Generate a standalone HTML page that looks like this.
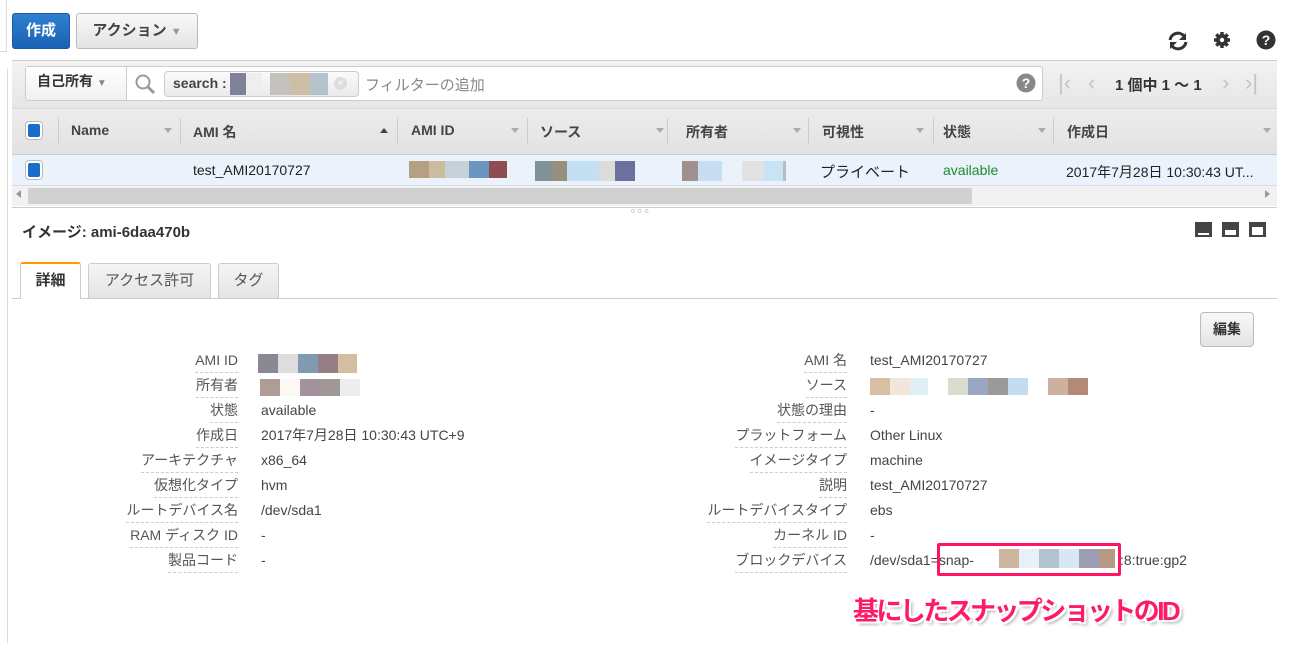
<!DOCTYPE html>
<html><head><meta charset="utf-8">
<style>
*{box-sizing:border-box;margin:0;padding:0}
body{width:1291px;height:651px;background:#fff;font-family:"Liberation Sans","Noto Sans CJK JP",sans-serif;font-size:14px;color:#333;position:relative;overflow:hidden}
.a{position:absolute;white-space:nowrap}
.btn{position:absolute;border:1px solid #bbb;border-radius:3px;background:linear-gradient(#f8f8f8,#e4e4e4);font-weight:bold;color:#444;text-align:center}
.sw{position:absolute;height:17px}
.hd{position:absolute;top:122px;font-weight:bold;font-size:14px;color:#444}
.dv{position:absolute;top:118px;width:1px;height:26px;background:#ccc}
.ar{position:absolute;top:128px;width:0;height:0;border-left:4px solid transparent;border-right:4px solid transparent;border-top:5px solid #aaa}
.lb{position:absolute;text-align:right;color:#555;font-size:14px;border-bottom:1px dashed #ccc;padding-bottom:3px;line-height:17px}
.vl{position:absolute;font-size:14px;color:#444;line-height:17px}
.pg{position:absolute;top:70px;font-size:22px;color:#c4c4c4}
</style></head><body>
<div class="a" style="left:7px;top:68px;width:1px;height:575px;background:#ddd"></div>
<div class="a" style="left:0;top:0;width:7px;height:52px;border-right:1px solid #ddd;border-bottom:1px solid #ddd"></div>

<div class="btn" style="left:12px;top:13px;width:58px;height:36px;background:linear-gradient(#2f7fd0,#1a62b5);border-color:#165aa7;color:#fff;line-height:34px;font-size:15px">作成</div>
<div class="btn" style="left:76px;top:13px;width:122px;height:36px;line-height:34px;font-size:15px">アクション <span style="color:#999;font-size:11px">▼</span></div>

<svg class="a" style="left:1166px;top:29px" width="24" height="24" viewBox="0 0 24 24"><path d="M4 11a8 8 0 0 1 14-4" fill="none" stroke="#333" stroke-width="3"/><path d="M20 4v7h-7z" fill="#333"/><path d="M20 13a8 8 0 0 1-14 4" fill="none" stroke="#333" stroke-width="3"/><path d="M4 20v-7h7z" fill="#333"/></svg>
<svg class="a" style="left:1213px;top:31px" width="18" height="18" viewBox="0 0 18 18"><circle cx="9" cy="9" r="6" fill="#333"/><g stroke="#333" stroke-width="3.4"><path d="M9 1v16M1 9h16M3.3 3.3l11.4 11.4M14.7 3.3L3.3 14.7"/></g><circle cx="9" cy="9" r="2.2" fill="#fff"/></svg>
<svg class="a" style="left:1256px;top:30px" width="20" height="20" viewBox="0 0 20 20"><circle cx="10" cy="10" r="9.5" fill="#333"/><text x="10" y="15" text-anchor="middle" font-family="Liberation Sans" font-weight="bold" font-size="14" fill="#fff">?</text></svg>

<div class="a" style="left:12px;top:60px;width:1265px;height:48px;background:linear-gradient(#f2f2f2,#e6e6e6);border-top:1px solid #ccc"></div>
<div class="a" style="left:25px;top:66px;width:1018px;height:35px;background:#fff;border:1px solid #ccc;border-radius:3px"></div>
<div class="a" style="left:26px;top:67px;width:101px;height:33px;background:linear-gradient(#fff,#f0f0f0);border-right:1px solid #ccc;font-weight:bold;line-height:28px;padding-left:11px;font-size:14px;color:#333">自己所有 <span style="color:#888;font-size:10px">▼</span></div>
<svg class="a" style="left:134px;top:73px" width="22" height="22" viewBox="0 0 22 22"><circle cx="9" cy="9" r="6.5" fill="none" stroke="#999" stroke-width="2"/><path d="M14 14l6 6" stroke="#999" stroke-width="3"/></svg>
<div class="a" style="left:164px;top:71px;width:195px;height:26px;border:1px solid #ccc;border-radius:4px;background:linear-gradient(#fafafa,#eaeaea)"></div>
<div class="a" style="left:173px;top:75px;font-weight:bold;font-size:14px;color:#444">search :</div>
<div class="sw" style="left:230px;top:73px;width:16px;height:22px;background:#80819a"></div>
<div class="sw" style="left:246px;top:73px;width:16px;height:22px;background:#eee"></div>
<div class="sw" style="left:270px;top:73px;width:20px;height:22px;background:#c5c2bd"></div>
<div class="sw" style="left:290px;top:73px;width:20px;height:22px;background:#cdbfa6"></div>
<div class="sw" style="left:310px;top:73px;width:18px;height:22px;background:#b3c3cc"></div>
<div class="a" style="left:334px;top:77px;width:13px;height:13px;border-radius:50%;background:#ddd;color:#fff;font-size:10px;text-align:center;line-height:13px">×</div>
<div class="a" style="left:365px;top:74px;font-size:15px;color:#888">フィルターの追加</div>
<svg class="a" style="left:1016px;top:73px" width="20" height="20" viewBox="0 0 20 20"><circle cx="10" cy="10" r="9.5" fill="#888"/><text x="10" y="15" text-anchor="middle" font-family="Liberation Sans" font-weight="bold" font-size="14" fill="#fff">?</text></svg>
<div class="pg" style="left:1058px">|‹</div>
<div class="pg" style="left:1088px">‹</div>
<div class="a" style="left:1115px;top:74px;font-weight:bold;font-size:15px;color:#333">1 個中 1 ～ 1</div>
<div class="pg" style="left:1222px">›</div>
<div class="pg" style="left:1245px">›|</div>

<div class="a" style="left:12px;top:108px;width:1265px;height:47px;background:linear-gradient(#ececec,#e2e2e2);border-top:1px solid #d8d8d8;border-bottom:1px solid #ccc"></div>
<div class="a" style="left:25px;top:121px;width:18px;height:19px;border:1px solid #bbb;border-radius:4px;background:#fff"><div style="margin:2px;width:12px;height:13px;background:#1a6dcc;border-radius:2px"></div></div>
<div class="dv" style="left:58px"></div>
<div class="hd" style="left:71px">Name</div><div class="ar" style="left:164px"></div><div class="dv" style="left:180px"></div>
<div class="hd" style="left:193px">AMI 名</div><div class="ar" style="left:380px;border-top:none;border-bottom:5px solid #444"></div><div class="dv" style="left:397px"></div>
<div class="hd" style="left:411px">AMI ID</div><div class="ar" style="left:511px"></div><div class="dv" style="left:527px"></div>
<div class="hd" style="left:540px">ソース</div><div class="ar" style="left:656px"></div><div class="dv" style="left:667px"></div>
<div class="hd" style="left:686px">所有者</div><div class="ar" style="left:793px"></div><div class="dv" style="left:808px"></div>
<div class="hd" style="left:822px">可視性</div><div class="ar" style="left:916px"></div><div class="dv" style="left:933px"></div>
<div class="hd" style="left:943px">状態</div><div class="ar" style="left:1038px"></div><div class="dv" style="left:1053px"></div>
<div class="hd" style="left:1067px">作成日</div><div class="ar" style="left:1263px"></div>

<div class="a" style="left:12px;top:155px;width:1265px;height:31px;background:#ebf2fc;border-bottom:1px solid #d5dde8"></div>
<div class="a" style="left:25px;top:160px;width:18px;height:20px;border:1px solid #bbb;border-radius:4px;background:#fff"><div style="margin:2px;width:12px;height:14px;background:#1a6dcc;border-radius:2px"></div></div>
<div class="a" style="left:193px;top:162px;font-size:14px;color:#222">test_AMI20170727</div>
<div class="sw" style="left:409px;top:161px;width:20px;background:#b6a084"></div><div class="sw" style="left:429px;top:161px;width:16px;background:#cbbb9f"></div><div class="sw" style="left:445px;top:161px;width:16px;background:#c5d0d8"></div><div class="sw" style="left:461px;top:161px;width:16px;background:#c5d0d8"></div><div class="sw" style="left:469px;top:161px;width:20px;background:#6896c0"></div><div class="sw" style="left:489px;top:161px;width:18px;background:#8f4d53"></div>
<div class="sw" style="left:535px;top:161px;width:16px;height:20px;background:#7f9298"></div><div class="sw" style="left:551px;top:161px;width:16px;height:20px;background:#958f7c"></div><div class="sw" style="left:567px;top:161px;width:16px;height:20px;background:#c3e0f2"></div><div class="sw" style="left:583px;top:161px;width:16px;height:20px;background:#c3e0f2"></div><div class="sw" style="left:599px;top:161px;width:16px;height:20px;background:#dcddd8"></div><div class="sw" style="left:615px;top:161px;width:20px;height:20px;background:#6b70a0"></div>
<div class="sw" style="left:682px;top:161px;width:16px;height:20px;background:#a19090"></div><div class="sw" style="left:698px;top:161px;width:24px;height:20px;background:#c6ddf2"></div><div class="sw" style="left:742px;top:161px;width:22px;height:20px;background:#e2e2e2"></div><div class="sw" style="left:764px;top:161px;width:19px;height:20px;background:#c7e4f6"></div><div class="sw" style="left:783px;top:161px;width:3px;height:20px;background:#bbb"></div>
<div class="a" style="left:820px;top:161px;font-size:15px;color:#222">プライベート</div>
<div class="a" style="left:943px;top:162px;font-size:14px;color:#1d8a2d">available</div>
<div class="a" style="left:1066px;top:162px;font-size:14px;color:#222">2017年7月28日 10:30:43 UT...</div>

<div class="a" style="left:12px;top:186px;width:1265px;height:20px;background:#f2f2f2"></div>
<div class="a" style="left:28px;top:188px;width:944px;height:16px;background:#d0d0d0"></div>
<div class="a" style="left:16px;top:190px;border-right:5px solid #999;border-top:4px solid transparent;border-bottom:4px solid transparent"></div>
<div class="a" style="left:1265px;top:190px;border-left:5px solid #999;border-top:4px solid transparent;border-bottom:4px solid transparent"></div>
<div class="a" style="left:12px;top:207px;width:1265px;height:1px;background:#ccc"></div>
<div class="a" style="left:631px;top:208px;font-size:7px;color:#bbb;letter-spacing:3px">ooo</div>

<div class="a" style="left:22px;top:221px;font-weight:bold;font-size:15px;color:#333">イメージ: ami-6daa470b</div>
<div class="a" style="left:1195px;top:222px;width:17px;height:15px;background:#444"><div style="position:absolute;left:3px;bottom:2px;width:11px;height:2px;background:#fff"></div></div>
<div class="a" style="left:1222px;top:222px;width:17px;height:15px;background:#444"><div style="position:absolute;left:3px;bottom:2px;width:11px;height:5px;background:#fff"></div></div>
<div class="a" style="left:1249px;top:222px;width:17px;height:15px;background:#444"><div style="position:absolute;left:3px;bottom:2px;width:11px;height:8px;background:#fff"></div></div>

<div class="a" style="left:12px;top:298px;width:1265px;height:1px;background:#ccc"></div>
<div class="a" style="left:20px;top:262px;width:61px;height:37px;background:#fff;border:1px solid #ccc;border-top:2px solid #f90;border-bottom:none;border-radius:3px 3px 0 0;text-align:center;line-height:34px;font-weight:bold;font-size:15px;color:#333">詳細</div>
<div class="a" style="left:88px;top:263px;width:123px;height:35px;background:linear-gradient(#f5f5f5,#e4e4e4);border:1px solid #ccc;border-bottom:none;border-radius:3px 3px 0 0;text-align:center;line-height:34px;font-size:15px;color:#555">アクセス許可</div>
<div class="a" style="left:218px;top:263px;width:61px;height:35px;background:linear-gradient(#f5f5f5,#e4e4e4);border:1px solid #ccc;border-bottom:none;border-radius:3px 3px 0 0;text-align:center;line-height:34px;font-size:15px;color:#555">タグ</div>

<div class="btn" style="left:1200px;top:312px;width:54px;height:35px;line-height:33px;font-size:14px;font-weight:bold;color:#333;border-radius:4px">編集</div>

<div class="lb" style="right:1053px;top:352px">AMI ID</div>
<div class="lb" style="right:1053px;top:377px">所有者</div>
<div class="lb" style="right:1053px;top:402px">状態</div>
<div class="lb" style="right:1053px;top:427px">作成日</div>
<div class="lb" style="right:1053px;top:452px">アーキテクチャ</div>
<div class="lb" style="right:1053px;top:477px">仮想化タイプ</div>
<div class="lb" style="right:1053px;top:502px">ルートデバイス名</div>
<div class="lb" style="right:1053px;top:527px">RAM ディスク ID</div>
<div class="lb" style="right:1053px;top:552px">製品コード</div>

<div class="sw" style="left:258px;top:354px;width:20px;height:19px;background:#8b8896"></div><div class="sw" style="left:278px;top:354px;width:20px;height:19px;background:#dddde0"></div><div class="sw" style="left:298px;top:354px;width:20px;height:19px;background:#7f9ab1"></div><div class="sw" style="left:318px;top:354px;width:20px;height:19px;background:#967e85"></div><div class="sw" style="left:338px;top:354px;width:19px;height:19px;background:#d5bea0"></div>
<div class="sw" style="left:260px;top:379px;width:20px;height:17px;background:#b09c97"></div><div class="sw" style="left:280px;top:379px;width:20px;height:17px;background:#fcf9f5"></div><div class="sw" style="left:300px;top:379px;width:20px;height:17px;background:#a3929c"></div><div class="sw" style="left:320px;top:379px;width:20px;height:17px;background:#9f9895"></div><div class="sw" style="left:340px;top:379px;width:20px;height:17px;background:#ededef"></div>
<div class="vl" style="left:261px;top:402px">available</div>
<div class="vl" style="left:261px;top:427px">2017年7月28日 10:30:43 UTC+9</div>
<div class="vl" style="left:261px;top:452px">x86_64</div>
<div class="vl" style="left:261px;top:477px">hvm</div>
<div class="vl" style="left:261px;top:502px">/dev/sda1</div>
<div class="vl" style="left:261px;top:527px">-</div>
<div class="vl" style="left:261px;top:552px">-</div>

<div class="lb" style="right:444px;top:352px">AMI 名</div>
<div class="lb" style="right:444px;top:377px">ソース</div>
<div class="lb" style="right:444px;top:402px">状態の理由</div>
<div class="lb" style="right:444px;top:427px">プラットフォーム</div>
<div class="lb" style="right:444px;top:452px">イメージタイプ</div>
<div class="lb" style="right:444px;top:477px">説明</div>
<div class="lb" style="right:444px;top:502px">ルートデバイスタイプ</div>
<div class="lb" style="right:444px;top:527px">カーネル ID</div>
<div class="lb" style="right:444px;top:552px">ブロックデバイス</div>

<div class="vl" style="left:870px;top:352px">test_AMI20170727</div>
<div class="sw" style="left:870px;top:378px;width:20px;background:#d8bfa4"></div><div class="sw" style="left:890px;top:378px;width:20px;background:#f3e6d8"></div><div class="sw" style="left:910px;top:378px;width:18px;background:#dfeff3"></div><div class="sw" style="left:948px;top:378px;width:20px;background:#dadcd0"></div><div class="sw" style="left:968px;top:378px;width:20px;background:#9aa7c2"></div><div class="sw" style="left:988px;top:378px;width:20px;background:#9b9a9a"></div><div class="sw" style="left:1008px;top:378px;width:20px;background:#c4dcef"></div><div class="sw" style="left:1048px;top:378px;width:20px;background:#cfb09e"></div><div class="sw" style="left:1068px;top:378px;width:20px;background:#b28a76"></div>
<div class="vl" style="left:870px;top:402px">-</div>
<div class="vl" style="left:870px;top:427px">Other Linux</div>
<div class="vl" style="left:870px;top:452px">machine</div>
<div class="vl" style="left:870px;top:477px">test_AMI20170727</div>
<div class="vl" style="left:870px;top:502px">ebs</div>
<div class="vl" style="left:870px;top:527px">-</div>
<div class="vl" style="left:870px;top:552px">/dev/sda1=snap-</div>
<div class="sw" style="left:999px;top:549px;width:20px;height:19px;background:#cdb59e"></div><div class="sw" style="left:1019px;top:549px;width:20px;height:19px;background:#e6f0f6"></div><div class="sw" style="left:1039px;top:549px;width:20px;height:19px;background:#b2c2cf"></div><div class="sw" style="left:1059px;top:549px;width:20px;height:19px;background:#d8e7f2"></div><div class="sw" style="left:1079px;top:549px;width:20px;height:19px;background:#9c9fb4"></div><div class="sw" style="left:1099px;top:549px;width:16px;height:19px;background:#b89a84"></div>
<div class="vl" style="left:1120px;top:552px">:8:true:gp2</div>
<div class="a" style="left:937px;top:543px;width:184px;height:33px;border:3px solid #ff1462;border-radius:2px"></div>

<div class="a" style="left:853px;top:591px;font-size:26px;font-weight:bold;color:#ff1a66;letter-spacing:-2.6px;text-shadow:-2px -2px 0 #fff,2px -2px 0 #fff,-2px 2px 0 #fff,2px 2px 0 #fff,3px 3px 3px rgba(0,0,0,.35)">基にしたスナップショットのID</div>
</body></html>
